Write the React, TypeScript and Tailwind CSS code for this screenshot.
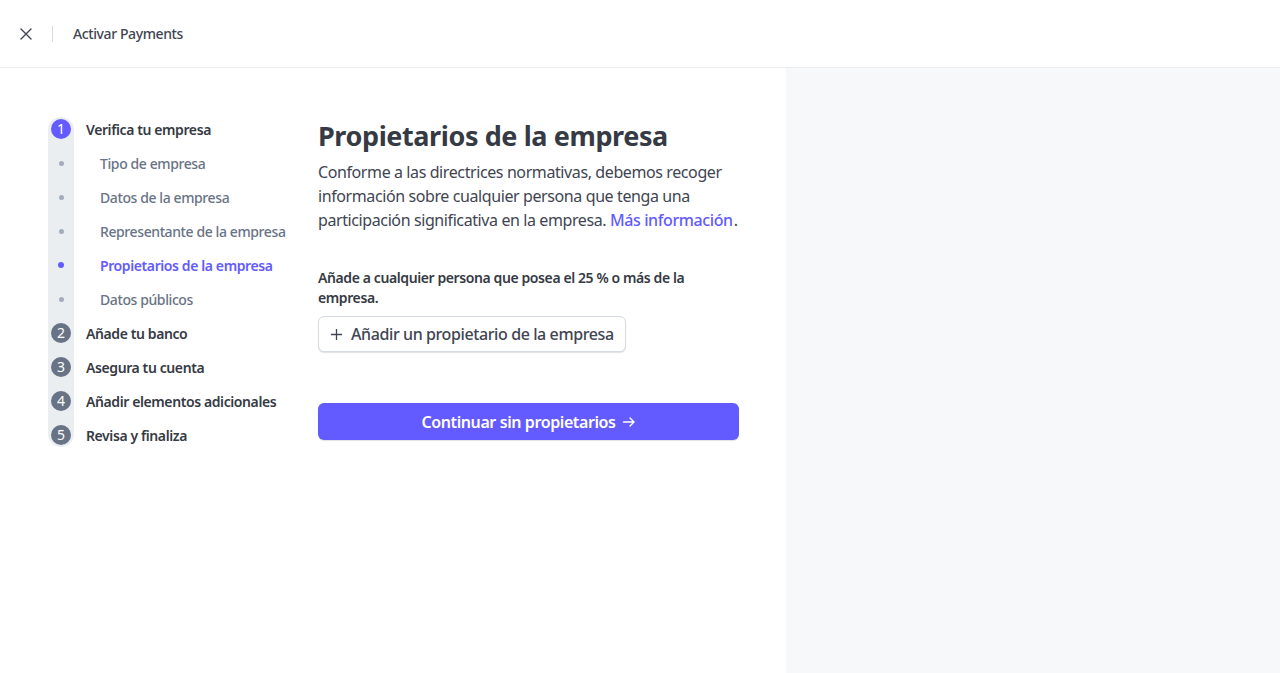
import React from "react";

const steps = [
  { n: 1, label: "Verifica tu empresa", active: true },
  { n: 2, label: "Añade tu banco" },
  { n: 3, label: "Asegura tu cuenta" },
  { n: 4, label: "Añadir elementos adicionales" },
  { n: 5, label: "Revisa y finaliza" },
];

const subs = [
  { label: "Tipo de empresa" },
  { label: "Datos de la empresa" },
  { label: "Representante de la empresa" },
  { label: "Propietarios de la empresa", active: true },
  { label: "Datos públicos" },
];

function StepCircle({ n, active }: { n: number; active?: boolean }) {
  return (
    <div
      className={
        "flex h-[20px] w-[20px] items-center justify-center rounded-full text-[14px] leading-none tracking-normal text-white " +
        (active ? "bg-[#635bff]" : "bg-[#687385]")
      }
    >
      {n}
    </div>
  );
}

export default function App() {
  return (
    <div
      className="flex h-[673px] w-[1280px] flex-col overflow-hidden bg-white tracking-[-0.025em] text-[#414552]"
      style={{ fontFamily: '"Noto Sans", "Open Sans", sans-serif' }}
    >
      <header className="flex h-[68px] shrink-0 items-center border-b border-[#ebeef1] pl-[19px]">
        <svg width="14" height="14" viewBox="0 0 14 14" className="text-[#414552]">
          <path d="M2 2L12 12M12 2L2 12" stroke="currentColor" strokeWidth="1.4" strokeLinecap="round" />
        </svg>
        <div className="ml-[19px] h-[16px] w-px bg-[#d5dbe1]" />
        <span className="ml-[20px] text-[14px] font-medium text-[#414552]">Activar Payments</span>
      </header>
      <div className="flex flex-1">
        <div className="flex w-[786px] shrink-0 items-start pl-[48px] pt-[44px]">
          <nav className="relative w-[246px] shrink-0">
            <div className="absolute bottom-[5px] left-0 top-[5px] w-[26px] rounded-full bg-[#ebeef1]" />
            <div className="relative flex flex-col">
              {steps.map((s) => (
                <React.Fragment key={s.n}>
                  <div className="flex h-[34px] items-center">
                    <div className="flex w-[38px] justify-center pl-[3px] pr-[15px]">
                      <StepCircle n={s.n} active={s.active} />
                    </div>
                    <span className="text-[14px] font-semibold text-[#353a44]">{s.label}</span>
                  </div>
                  {s.active &&
                    subs.map((sub) => (
                      <div key={sub.label} className="flex h-[34px] items-center">
                        <div className="flex w-[26px] justify-center">
                          <div
                            className={
                              sub.active
                                ? "h-[6px] w-[6px] rounded-full bg-[#635bff]"
                                : "h-[5px] w-[5px] rounded-full bg-[#a3acba]"
                            }
                          />
                        </div>
                        <span
                          className={
                            "ml-[26px] text-[14px] " +
                            (sub.active ? "font-semibold text-[#635bff]" : "font-medium text-[#687385]")
                          }
                        >
                          {sub.label}
                        </span>
                      </div>
                    ))}
                </React.Fragment>
              ))}
            </div>
          </nav>
          <main className="w-[445px] shrink-0 pl-[24px] pt-[6px]">
            <h1 className="text-[27px] font-bold leading-[36px] text-[#353a44]">Propietarios de la empresa</h1>
            <p className="mt-[6px] text-[16px] leading-[24px] text-[#414552]">
              Conforme a las directrices normativas, debemos recoger información sobre cualquier persona que tenga una
              participación significativa en la empresa.{" "}
              <span className="whitespace-nowrap">
                <a className="font-medium text-[#635bff]">Más información</a>
                <span className="ml-[1px]">.</span>
              </span>
            </p>
            <p className="mt-[36px] text-[14px] font-semibold leading-[20px] text-[#353a44]">
              Añade a cualquier persona que posea el 25 % o más de la empresa.
            </p>
            <button className="mt-[8px] flex h-[36px] items-center gap-[8px] rounded-md border border-[#d5dbe1] bg-white px-[11px] text-[16px] font-medium text-[#414552] shadow-[0_1px_1px_rgba(0,0,0,0.12)]">
              <svg width="13" height="13" viewBox="0 0 14 14">
                <path d="M7 1V13M1 7H13" stroke="currentColor" strokeWidth="1.4" />
              </svg>
              Añadir un propietario de la empresa
            </button>
            <button className="mt-[51px] flex h-[37px] w-full items-center justify-center gap-[6px] rounded-md bg-[#635bff] text-[16px] font-semibold text-white shadow-[0_1px_1px_rgba(0,0,0,0.12)]">
              Continuar sin propietarios
              <svg width="14" height="14" viewBox="0 0 14 14">
                <path d="M1.5 7H12M8 3L12 7L8 11" stroke="currentColor" strokeWidth="1.4" fill="none" strokeLinecap="round" strokeLinejoin="round" />
              </svg>
            </button>
          </main>
        </div>
        <aside className="flex-1 bg-[#f6f8fa]" />
      </div>
    </div>
  );
}
